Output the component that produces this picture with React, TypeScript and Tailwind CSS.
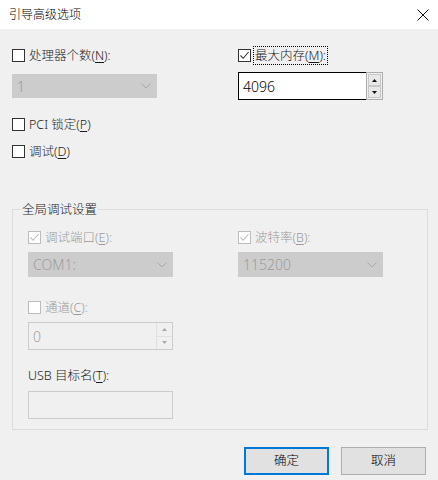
import React from 'react';

const font = { fontFamily: "'Noto Sans', 'Noto Sans CJK SC', sans-serif" };

const Mn = ({ c }: { c: string }) => <span className="underline underline-offset-2">{c}</span>;

const CheckBox = ({ checked = false, disabled = false }: { checked?: boolean; disabled?: boolean }) => (
  <span
    className={`flex h-[13px] w-[13px] shrink-0 items-center justify-center border bg-white ${
      disabled ? 'border-[#bcbcbc]' : 'border-[#333333]'
    }`}
  >
    {checked && (
      <svg width="11" height="11" viewBox="0 0 11 11">
        <path d="M1.5 5.5 L4.2 8.3 L9.6 2" stroke={disabled ? '#bcbcbc' : '#333333'} strokeWidth="1.1" fill="none" />
      </svg>
    )}
  </span>
);

const CheckRow = ({
  children,
  checked,
  disabled,
  focused,
}: {
  children: React.ReactNode;
  checked?: boolean;
  disabled?: boolean;
  focused?: boolean;
}) => (
  <div className="flex h-[17px] items-center gap-[2px]">
    <CheckBox checked={checked} disabled={disabled} />
    <span
      className={`whitespace-nowrap px-[1px] text-[12.5px] font-light leading-[17px] ${
        disabled ? 'text-[#9a9a9a]' : 'text-[#1a1a1a]'
      } ${focused ? 'border border-dotted border-black' : 'border border-transparent'}`}
    >
      {children}
    </span>
  </div>
);

const Chevron = () => (
  <svg width="10" height="6" viewBox="0 0 10 6">
    <path d="M0.5 0.5 L5 5 L9.5 0.5" stroke="#a8a8a8" strokeWidth="1" fill="none" />
  </svg>
);

const DisabledSelect = ({ value, w, h }: { value: string; w: string; h: string }) => (
  <div className={`flex ${w} ${h} items-center justify-between bg-[#cccccc] pl-[5px] pr-[6px]`}>
    <span className="text-[14px] font-light text-[#9c9c9c]">{value}</span>
    <Chevron />
  </div>
);

const Tri = ({ up, color }: { up?: boolean; color: string }) => (
  <svg width="5" height="3" viewBox="0 0 5 3">
    <path d={up ? 'M0 3 L2.5 0 L5 3Z' : 'M0 0 L2.5 3 L5 0Z'} fill={color} />
  </svg>
);

export default function App() {
  return (
    <div className="flex h-[480px] w-[438px] flex-col bg-[#f0f0f0]" style={font}>
      {/* title bar */}
      <div className="flex h-[29px] items-center justify-between bg-white pl-[9px] pr-[9px]">
        <span className="text-[12px] font-light text-black">引导高级选项</span>
        <svg width="12" height="12" viewBox="0 0 12 12">
          <path d="M0.5 0.5 L11.5 11.5 M11.5 0.5 L0.5 11.5" stroke="#111" strokeWidth="1" />
        </svg>
      </div>

      <div className="flex flex-col px-3 pt-[18px]">
        <div className="flex">
          <div className="flex w-[226px] flex-col">
            <CheckRow>
              处理器个数(<Mn c="N" />):
            </CheckRow>
            <div className="mt-[10px]">
              <DisabledSelect value="1" w="w-[145px]" h="h-[24px]" />
            </div>
            <div className="mt-[18px]">
              <CheckRow>
                PCI 锁定(<Mn c="P" />)
              </CheckRow>
            </div>
            <div className="mt-[10px]">
              <CheckRow>
                调试(<Mn c="D" />)
              </CheckRow>
            </div>
          </div>
          <div className="flex flex-col">
            <CheckRow checked focused>
              最大内存(<Mn c="M" />):
            </CheckRow>
            <div className="mt-[8px] flex h-[28px] w-[145px]">
              <div className="flex flex-1 items-center border border-r-0 border-black bg-white pl-[4px] text-[14px] font-light text-black">
                4096
              </div>
              <div className="flex w-[17px] flex-col border border-[#acacac] bg-[#f0f0f0] p-[1px]">
                <div className="flex flex-1 items-center justify-center border border-[#c8c8c8] bg-[#e8e8e8]">
                  <Tri up color="#111" />
                </div>
                <div className="flex flex-1 items-center justify-center border border-[#c8c8c8] bg-[#e8e8e8]">
                  <Tri color="#111" />
                </div>
              </div>
            </div>
          </div>
        </div>

        <fieldset className="mt-[41px] w-[416px] border border-[#dcdcdc]">
          <legend className="ml-[8px] px-[1px] text-[12.5px] font-light leading-[17px] text-[#1a1a1a]">全局调试设置</legend>
          <div className="flex flex-col pl-[15px] pt-[11px] pb-[10px]">
            <div className="flex">
              <div className="flex w-[210px] flex-col">
                <CheckRow checked disabled>
                  调试端口(<Mn c="E" />):
                </CheckRow>
                <div className="mt-[6px]">
                  <DisabledSelect value="COM1:" w="w-[145px]" h="h-[25px]" />
                </div>
              </div>
              <div className="flex flex-col">
                <CheckRow checked disabled>
                  波特率(<Mn c="B" />):
                </CheckRow>
                <div className="mt-[6px]">
                  <DisabledSelect value="115200" w="w-[145px]" h="h-[25px]" />
                </div>
              </div>
            </div>

            <div className="mt-[22px]">
              <CheckRow disabled>
                通道(<Mn c="C" />):
              </CheckRow>
            </div>
            <div className="mt-[6px] flex h-[28px] w-[145px] border border-[#cccccc] bg-[#f0f0f0]">
              <div className="flex flex-1 items-center pl-[4px] text-[14px] font-light text-[#a0a0a0]">0</div>
              <div className="flex w-[16px] flex-col border-l border-[#e0e0e0]">
                <div className="flex flex-1 items-center justify-center border-b border-[#e0e0e0]">
                  <Tri up color="#a8a8a8" />
                </div>
                <div className="flex flex-1 items-center justify-center">
                  <Tri color="#a8a8a8" />
                </div>
              </div>
            </div>

            <div className="mt-[17px] h-[17px] text-[12.5px] font-light leading-[17px] text-[#1a1a1a]">
              USB 目标名(<Mn c="T" />):
            </div>
            <div className="mt-[7px] h-[28px] w-[145px] border border-[#cccccc] bg-[#f0f0f0]" />
          </div>
        </fieldset>

        <div className="mt-[17px] flex justify-end gap-[12px]">
          <button className="flex h-[28px] w-[85px] items-center justify-center border-2 border-[#0078d7] bg-[#e1e1e1] text-[12.5px] font-light text-black">
            确定
          </button>
          <button className="flex h-[28px] w-[85px] items-center justify-center border border-[#adadad] bg-[#e1e1e1] text-[12.5px] font-light text-black">
            取消
          </button>
        </div>
      </div>
    </div>
  );
}
